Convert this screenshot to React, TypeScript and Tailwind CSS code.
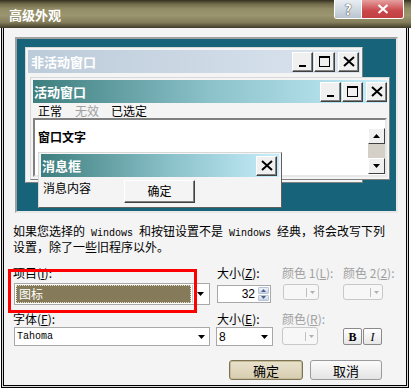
import React from 'react';

function Glyph({ kind }: { kind: 'min' | 'max' | 'close' }) {
  if (kind === 'min')
    return (
      <svg width="8" height="12" viewBox="0 0 8 12" shapeRendering="crispEdges">
        <rect x="0" y="9" width="7" height="2" fill="#000" />
      </svg>
    );
  if (kind === 'max')
    return (
      <svg width="11" height="11" viewBox="0 0 11 11" shapeRendering="crispEdges">
        <rect x="0.5" y="0.5" width="10" height="10" fill="none" stroke="#000" />
        <rect x="0" y="0" width="11" height="2" fill="#000" />
      </svg>
    );
  return (
    <svg width="12" height="11" viewBox="0 0 12 11">
      <path d="M1 1L11 10M11 1L1 10" stroke="#000" strokeWidth="2" />
    </svg>
  );
}

function CapBtn({ kind }: { kind: 'min' | 'max' | 'close' }) {
  return (
    <div className="w-[21px] h-[20px] bg-[#f0f0f0] border border-t-white border-l-white border-r-[#404040] border-b-[#404040] shadow-[inset_-1px_-1px_0_#808080] flex items-center justify-center">
      <Glyph kind={kind} />
    </div>
  );
}

function Tri({ color = '#000' }: { color?: string }) {
  return (
    <svg width="7" height="4" viewBox="0 0 7 4">
      <path d="M0 0H7L3.5 4Z" fill={color} />
    </svg>
  );
}

function ColorBtn({ h }: { h: string }) {
  return (
    <div className={`${h} rounded-[3px] border border-[#c8c8c8] bg-[#f7f7f7] flex items-center justify-end pr-[3px]`}>
      <div className="w-px h-[9px] bg-[#c0c0c0] mr-[3px]" />
      <svg width="5" height="3" viewBox="0 0 5 3">
        <path d="M0 0H5L2.5 3Z" fill="#b0b0b0" />
      </svg>
    </div>
  );
}

export default function App() {
  const cjk = "font-['Noto_Sans_CJK_SC','Noto_Sans',sans-serif]";
  const mono = "font-['Liberation_Mono',monospace] text-[10px] whitespace-pre";
  return (
    <div className={`relative w-[411px] h-[390px] overflow-hidden bg-white flex flex-col ${cjk} text-[12px] text-black`}>
      {/* Title bar */}
      <div className="h-[28px] shrink-0 bg-[linear-gradient(to_bottom,#35301f_0%,#6f6a4a_14%,#928c66_32%,#9b966f_55%,#837d5a_80%,#3f3a28_100%)] flex items-start justify-between">
        <div className="pl-[9px] pt-[7px] text-white font-bold text-[13px] leading-[15px]">高级外观</div>
        <div className="mr-[7px] flex border border-t-0 border-white rounded-b-[3px] overflow-hidden h-[19px]">
          <div className="w-[27px] h-full bg-[linear-gradient(to_bottom,#e9eef3,#b9c4cf)] flex items-center justify-center border-r border-white">
            <span className="text-white font-bold text-[14px] leading-none [text-shadow:0_0_1px_#333,0_0_1px_#333]">?</span>
          </div>
          <div className="w-[41px] h-full bg-[linear-gradient(to_bottom,#e6a0a0,#c9474a_60%,#c34042)] flex items-center justify-center">
            <svg width="12" height="10" viewBox="0 0 12 10">
              <path d="M1.5 1L10.5 9M10.5 1L1.5 9" stroke="#fff" strokeWidth="2.2" />
            </svg>
          </div>
        </div>
      </div>

      {/* Body with frame */}
      <div className="flex-1 ml-px mr-[2px] mb-[2px] border-x border-b border-black p-px pt-0 bg-[#d8d8d8] flex">
        <div className="flex-1 border-x border-b border-black bg-[#f4f4f4] flex flex-col">
          {/* Preview */}
          <div className="relative ml-[11px] mt-[9px] w-[383px] h-[176px] border-2 border-t-[#a0a0a0] border-l-[#a0a0a0] border-b-[#e8e8e8] border-r-[#e8e8e8] bg-[#17637a]">
            {/* Inactive window */}
            <div className="absolute left-[8px] top-[8px] w-[338px] h-[136px] border border-t-[#d8d8d8] border-l-[#d8d8d8] border-r-[#808080] border-b-[#808080] bg-[#f4f4f4] p-[2px]">
              <div className="h-[23px] bg-[linear-gradient(to_right,#bccbd9,#dbe5ef)] flex items-center justify-between pl-[3px] pr-[1px]">
                <span className="text-white font-bold text-[13px] leading-none">非活动窗口</span>
                <div className="flex items-center">
                  <CapBtn kind="min" />
                  <div className="w-px" />
                  <CapBtn kind="max" />
                  <div className="w-[3px]" />
                  <CapBtn kind="close" />
                </div>
              </div>
            </div>
            {/* Active window */}
            <div className="absolute left-[13px] top-[38px] w-[360px] h-[103px] border border-t-[#d8d8d8] border-l-[#d8d8d8] border-r-[#808080] border-b-[#808080] bg-[#f4f4f4] p-[2px] flex flex-col">
              <div className="h-[23px] shrink-0 bg-[linear-gradient(to_right,#3d7e7e,#8cc2ca_50%,#c6eefa)] flex items-center justify-between pl-[1px] pr-0">
                <span className="text-white font-bold text-[13px] leading-none">活动窗口</span>
                <div className="flex items-center">
                  <CapBtn kind="min" />
                  <div className="w-px" />
                  <CapBtn kind="max" />
                  <div className="w-[3px]" />
                  <CapBtn kind="close" />
                </div>
              </div>
              <div className="h-[15px] shrink-0 flex items-center pl-[5px] text-[12px] leading-none">
                <span>正常</span>
                <span className="ml-[13px] text-[#a0a0a0]">无效</span>
                <span className="ml-[12px]">已选定</span>
              </div>
              <div className="flex-1 border-2 border-t-[#808080] border-l-[#808080] border-b-[#e8e8e8] border-r-[#e8e8e8] bg-white flex">
                <div className="flex-1 pl-[3px] pt-[11px] font-bold text-[12px] leading-none">窗口文字</div>
                <div className="w-[17px] flex flex-col pt-[8px] pb-[1px]">
                  <div className="h-[16px] bg-[#f0f0f0] border border-t-white border-l-white border-r-[#404040] border-b-[#404040] flex items-center justify-center">
                    <svg width="7" height="4" viewBox="0 0 7 4"><path d="M3.5 0L7 4H0Z" fill="#000" /></svg>
                  </div>
                  <div className="flex-1 bg-[#d4d0c8]" />
                  <div className="h-[16px] bg-[#f0f0f0] border border-t-white border-l-white border-r-[#404040] border-b-[#404040] flex items-center justify-center">
                    <Tri />
                  </div>
                </div>
              </div>
            </div>
            {/* Message box */}
            <div className="absolute left-[21px] top-[113px] w-[244px] h-[56px] border border-t-[#d8d8d8] border-l-[#d8d8d8] border-r-[#606060] border-b-[#606060] bg-[#f4f4f4] p-[2px] pt-px flex flex-col">
              <div className="h-[23px] shrink-0 bg-[linear-gradient(to_right,#3d7e7e,#8cc2ca_55%,#c6eefa)] flex items-center justify-between pl-[1px] pr-[2px]">
                <span className="text-white font-bold text-[13px] leading-none">消息框</span>
                <CapBtn kind="close" />
              </div>
              <div className="flex-1 flex items-center">
                <span className="pl-[2px] text-[12px] leading-none -mt-[6px]">消息内容</span>
                <div className="ml-[33px] w-[71px] h-[23px] bg-[#f4f4f4] border border-t-white border-l-white border-r-[#404040] border-b-[#404040] shadow-[inset_-1px_-1px_0_#808080] flex items-center justify-center text-[12px]">
                  确定
                </div>
              </div>
            </div>
          </div>

          {/* Description */}
          <div className="ml-[9px] mt-[11px] text-[12px] leading-[13px] whitespace-nowrap">
            <div>如果您选择的<span className={mono}> Windows </span>和按钮设置不是<span className={mono}> Windows </span>经典，将会改写下列</div>
            <div>设置，除了一些旧程序以外。</div>
          </div>

          {/* Controls */}
          <div className="ml-[9px] mt-[13px] flex text-[12px] leading-[13px]">
            <div className="w-[204px]">项目(<u>I</u>):</div>
            <div className="w-[65px]">大小(<u>Z</u>):</div>
            <div className="w-[61px] text-[#a0a0a0]">颜色 1(<u>L</u>):</div>
            <div className="text-[#a0a0a0]">颜色 2(<u>2</u>):</div>
          </div>
          <div className="ml-[9px] mt-[4px] flex items-start h-[22px]">
            <div className="w-[204px]">
              <div className="ml-px w-[196px] h-[22px] border border-[#a8a8a8] bg-white flex items-center p-px">
                <div className="flex-1 h-[18px] bg-[#857a5a] border border-dotted border-[#e8e0c8] flex items-center pl-[2px] text-white text-[12px]">
                  图标
                </div>
                <div className="w-[16px] h-full flex items-center justify-center border-l border-[#d0d0d0] ml-[1px]">
                  <Tri />
                </div>
              </div>
            </div>
            <div className="w-[65px] pt-[2px]">
              <div className="w-[54px] h-[18px] border border-[#a8a8a8] bg-white flex items-center justify-end">
                <span className="font-['Liberation_Sans',sans-serif] text-[12px] leading-none mr-[3px]">32</span>
                <div className="w-[12px] h-full flex flex-col gap-px p-px pl-0">
                  <div className="flex-1 rounded-[1px] bg-[linear-gradient(to_bottom,#eef2f8,#c8d4e8)] border border-[#b8c4d8] flex items-center justify-center">
                    <svg width="5" height="3" viewBox="0 0 5 3"><path d="M2.5 0L5 3H0Z" fill="#4d6185" /></svg>
                  </div>
                  <div className="flex-1 rounded-[1px] bg-[linear-gradient(to_bottom,#eef2f8,#c8d4e8)] border border-[#b8c4d8] flex items-center justify-center">
                    <svg width="5" height="3" viewBox="0 0 5 3"><path d="M0 0H5L2.5 3Z" fill="#4d6185" /></svg>
                  </div>
                </div>
              </div>
            </div>
            <div className="w-[61px] pt-px pl-px">
              <div className="w-[36px]"><ColorBtn h="h-[16px]" /></div>
            </div>
            <div className="pt-px">
              <div className="w-[40px]"><ColorBtn h="h-[16px]" /></div>
            </div>
          </div>

          <div className="ml-[9px] mt-[7px] flex text-[12px] leading-[13px]">
            <div className="w-[204px]">字体(<u>F</u>):</div>
            <div className="w-[65px]">大小(<u>E</u>):</div>
            <div className="text-[#a0a0a0]">颜色(<u>R</u>):</div>
          </div>
          <div className="ml-[9px] mt-[2px] flex items-start h-[19px]">
            <div className="w-[204px]">
              <div className="ml-px w-[196px] h-[19px] border border-[#a8a8a8] bg-white flex items-center">
                <span className={`flex-1 pl-[2px] ${mono} leading-none`}>Tahoma</span>
                <div className="w-[16px] flex items-center justify-center"><Tri /></div>
              </div>
            </div>
            <div className="w-[65px]">
              <div className="-ml-px w-[57px] h-[19px] border border-[#a8a8a8] bg-white flex items-center">
                <span className="flex-1 pl-[2px] font-['Liberation_Sans',sans-serif] text-[12px] leading-none">8</span>
                <div className="w-[16px] flex items-center justify-center"><Tri /></div>
              </div>
            </div>
            <div className="w-[61px]">
              <div className="w-[36px]"><ColorBtn h="h-[18px]" /></div>
            </div>
            <div className="flex gap-px pt-px">
              <div className="w-[19px] h-[17px] rounded-[2px] border border-[#8a8a8a] bg-[linear-gradient(to_bottom,#ffffff,#e6e6e6)] flex items-center justify-center font-['Liberation_Serif',serif] font-bold text-[12px] leading-none">B</div>
              <div className="w-[19px] h-[17px] rounded-[2px] border border-[#8a8a8a] bg-[linear-gradient(to_bottom,#ffffff,#e6e6e6)] flex items-center justify-center font-['Liberation_Serif',serif] italic text-[12px] leading-none">I</div>
            </div>
          </div>

          {/* OK / Cancel */}
          <div className="mt-[14px] flex justify-end pr-[24px] gap-[7px]">
            <div className="w-[74px] h-[20px] rounded-[3px] border border-[#7a7358] bg-[linear-gradient(to_bottom,#e9e2cc,#d6ccb0)] shadow-[inset_0_0_0_1px_#c9bb94] flex items-center justify-center text-[13px] leading-none">确定</div>
            <div className="w-[72px] h-[20px] rounded-[3px] border border-[#9a9a9a] bg-[linear-gradient(to_bottom,#fbfbfb,#e4e4e4)] flex items-center justify-center text-[13px] leading-none">取消</div>
          </div>
        </div>
      </div>

      {/* Red annotation box */}
      <div className="absolute left-[8px] top-[269px] w-[189px] h-[44px] border-[3px] border-[#ff0000] pointer-events-none" />
    </div>
  );
}
